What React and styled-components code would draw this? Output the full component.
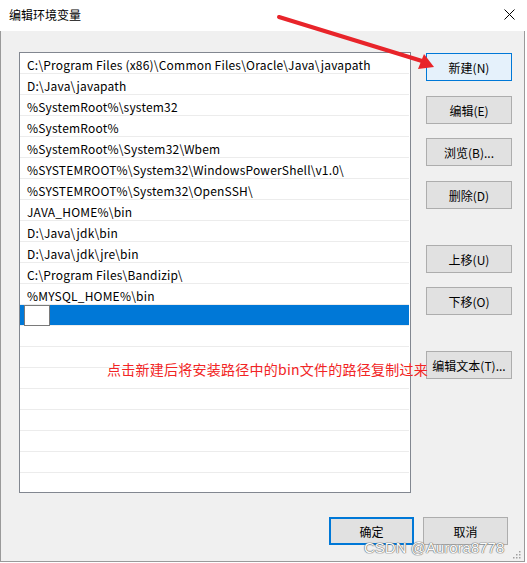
import React from "react";
import styled, { createGlobalStyle } from "styled-components";

const GlobalStyle = createGlobalStyle`
  html, body {
    margin: 0;
    padding: 0;
    background: #ffffff;
  }
  body {
    font-family: "Noto Sans CJK SC", "Noto Sans", sans-serif;
    font-size: 12px;
    color: #000;
  }
`;

const Window = styled.div`
  position: relative;
  width: 525px;
  height: 562px;
  display: flex;
  flex-direction: column;
  box-sizing: border-box;
  overflow: hidden;
`;

const TitleBar = styled.div`
  height: 31px;
  display: flex;
  align-items: center;
  justify-content: space-between;
  padding: 0 9px 0 9px;
  background: #fff;
  flex-shrink: 0;
`;

const Title = styled.span`
  font-size: 12px;
  line-height: 1;
  margin-top: -2px;
`;

const Close = styled.svg`
  width: 11px;
  height: 11px;
  margin-right: 1px;
  margin-top: -2px;
`;

const Body = styled.div`
  flex: 1;
  background: #f0f0f0;
  border: 1px solid #9a9a9a;
  border-top: none;
  padding: 21px 11px 0 18px;
  display: flex;
  flex-direction: column;
`;

const Main = styled.div`
  display: flex;
  gap: 15px;
`;

const List = styled.div`
  width: 392px;
  height: 441px;
  box-sizing: border-box;
  border: 1px solid #828790;
  background: #fff;
  overflow: hidden;
`;

const Row = styled.div`
  height: 21px;
  box-sizing: border-box;
  padding-top: ${(p) => (p.$selected ? "0" : "2px")};
  padding-left: ${(p) => (p.$selected ? "4px" : "7px")};
  margin-right: 1px;
  border-bottom: 1px solid #ececec;
  display: flex;
  align-items: center;
  background: ${(p) => (p.$selected ? "#0078d7" : "#fff")};
  white-space: nowrap;
  letter-spacing: 0.2px;
`;

const EditBox = styled.div`
  width: 24px;
  height: 19px;
  background: #fff;
  border: 1px solid #7a7a7a;
  box-sizing: content-box;
`;

const Side = styled.div`
  display: flex;
  flex-direction: column;
  padding-top: 1px;
`;

const Button = styled.button`
  width: ${(p) => p.$w || 86}px;
  height: 28px;
  margin-top: ${(p) => p.$top || 0}px;
  box-sizing: border-box;
  font-family: "Noto Sans CJK SC", "Noto Sans", sans-serif;
  font-size: 12px;
  color: #000;
  padding: 0;
  background: ${(p) => (p.$hot ? "#e5f1fb" : "#e1e1e1")};
  border: ${(p) =>
    p.$default ? "2px solid #0078d7" : p.$hot ? "1px solid #0078d7" : "1px solid #adadad"};
  cursor: default;
`;

const Footer = styled.div`
  display: flex;
  justify-content: flex-end;
  gap: 9px;
  margin-top: 24px;
  padding-right: 5px;
`;

const Note = styled.div`
  position: absolute;
  left: 107px;
  top: 359px;
  font-size: 14px;
  line-height: 20px;
  letter-spacing: 0.25px;
  color: #f22424;
  white-space: nowrap;
  font-family: "Noto Sans CJK SC", sans-serif;
`;

const Watermark = styled.div`
  position: absolute;
  left: 364px;
  top: 539px;
  font-family: "Liberation Sans", Arial, sans-serif;
  font-size: 15px;
  color: #fafafa;
  text-shadow: 0 0 1px #666, 0 0 1px #666, 0 0 1px #777;
  white-space: nowrap;
`;

const Overlay = styled.svg`
  position: absolute;
  left: 0;
  top: 0;
  width: 527px;
  height: 563px;
  pointer-events: none;
`;

const Grip = styled.svg`
  position: absolute;
  right: 4px;
  bottom: 3px;
  width: 10px;
  height: 10px;
`;

const paths = [
  "C:\\Program Files (x86)\\Common Files\\Oracle\\Java\\javapath",
  "D:\\Java\\javapath",
  "%SystemRoot%\\system32",
  "%SystemRoot%",
  "%SystemRoot%\\System32\\Wbem",
  "%SYSTEMROOT%\\System32\\WindowsPowerShell\\v1.0\\",
  "%SYSTEMROOT%\\System32\\OpenSSH\\",
  "JAVA_HOME%\\bin",
  "D:\\Java\\jdk\\bin",
  "D:\\Java\\jdk\\jre\\bin",
  "C:\\Program Files\\Bandizip\\",
  "%MYSQL_HOME%\\bin",
];

const sideButtons = [
  { label: "新建(N)", top: 0, hot: true },
  { label: "编辑(E)", top: 15 },
  { label: "浏览(B)...", top: 14 },
  { label: "删除(D)", top: 15 },
  { label: "上移(U)", top: 36 },
  { label: "下移(O)", top: 14 },
  { label: "编辑文本(T)...", top: 36 },
];

const App = () => {
  const empty = Array.from({ length: 8 });
  return (
    <>
      <GlobalStyle />
      <Window>
        <TitleBar>
          <Title>编辑环境变量</Title>
          <Close viewBox="0 0 11 11">
            <path d="M0.5 0.5 L10.5 10.5 M10.5 0.5 L0.5 10.5" stroke="#000" strokeWidth="1" />
          </Close>
        </TitleBar>
        <Body>
          <Main>
            <List>
              {paths.map((p) => (
                <Row key={p}>{p}</Row>
              ))}
              <Row $selected>
                <EditBox />
              </Row>
              {empty.map((_, i) => (
                <Row key={"e" + i} />
              ))}
            </List>
            <Side>
              {sideButtons.map((b) => (
                <Button key={b.label} $top={b.top} $hot={b.hot}>
                  {b.label}
                </Button>
              ))}
            </Side>
          </Main>
          <Footer>
            <Button $w={85} $default>确定</Button>
            <Button $w={85}>取消</Button>
          </Footer>
        </Body>
        <Grip viewBox="0 0 10 10">
          {[[8, 2], [5, 5], [8, 5], [2, 8], [5, 8], [8, 8]].map(([x, y]) => (
            <rect key={x + "-" + y} x={x} y={y} width="1.5" height="1.5" fill="#a0a0a0" />
          ))}
        </Grip>
      </Window>
      <Note>点击新建后将安装路径中的bin文件的路径复制过来</Note>
      <Overlay viewBox="0 0 527 563">
        <line x1="279" y1="17" x2="422" y2="61" stroke="#e8242a" strokeWidth="4" strokeLinecap="round" />
        <polygon points="434,67 418,69 424,54" fill="#e8242a" />
      </Overlay>
      <Watermark>CSDN @Aurora8778</Watermark>
    </>
  );
};

export default App;
